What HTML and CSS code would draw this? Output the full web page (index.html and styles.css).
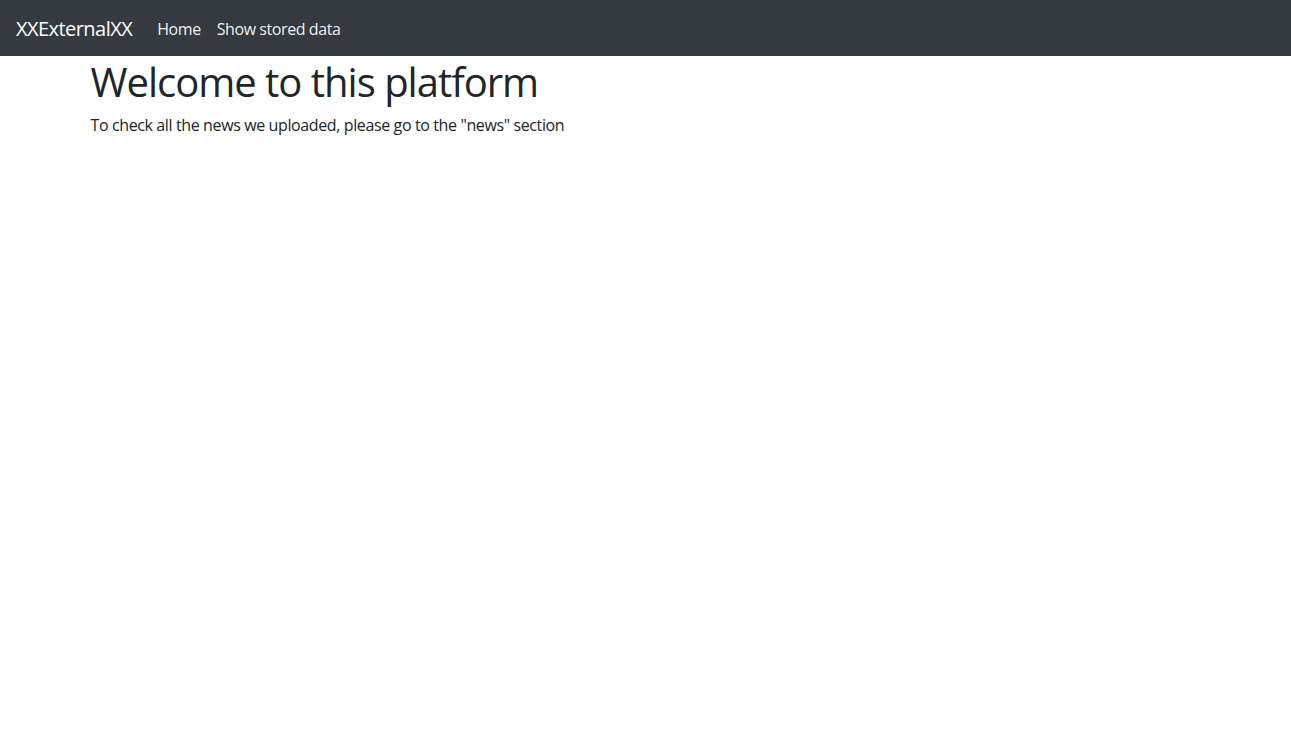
FILE: index.html
```html
<!DOCTYPE html>
<html lang="en">
<head>
<meta charset="utf-8">
<title>XXExternalXX</title>
<link rel="stylesheet" href="styles.css">
</head>
<body>
<nav class="navbar">
  <a class="brand" href="#">XXExternalXX</a>
  <ul class="nav">
    <li><a class="nav-link" href="#">Home</a></li>
    <li><a class="nav-link" href="#">Show stored data</a></li>
  </ul>
</nav>
<main class="container">
  <h1 class="title">Welcome to this platform</h1>
  <p class="lead-text">To check all the news we uploaded, please go to the "news" section</p>
</main>
</body>
</html>
```

FILE: styles.css
```css
* { box-sizing: border-box; }
body {
  margin: 0;
  font-family: "Open Sans", "Noto Sans", sans-serif;
  font-size: 16px;
  line-height: 1.5;
  color: #212529;
  background: #fff;
}
.navbar {
  display: flex;
  align-items: center;
  height: 56px;
  padding: 9px 16px 7px;
  background: #343a40;
}
.brand {
  font-size: 20px;
  color: #fff;
  text-decoration: none;
  margin-right: 17px;
  line-height: 1.5;
  letter-spacing: -0.55px;
}
.nav {
  display: flex;
  list-style: none;
  margin: 0;
  padding: 0;
}
.nav-link {
  display: block;
  padding: 8px;
  color: rgba(255,255,255,0.95);
  text-decoration: none;
  letter-spacing: -0.42px;
}
.container {
  max-width: 1140px;
  margin: 0 auto;
  padding: 2px 15px 0;
}
.title {
  font-size: 40px;
  font-weight: 400;
  line-height: 1.2;
  margin: 0 0 7px;
  letter-spacing: -1px;
}
.lead-text {
  margin: 0 0 16px;
  letter-spacing: -0.38px;
}
```
